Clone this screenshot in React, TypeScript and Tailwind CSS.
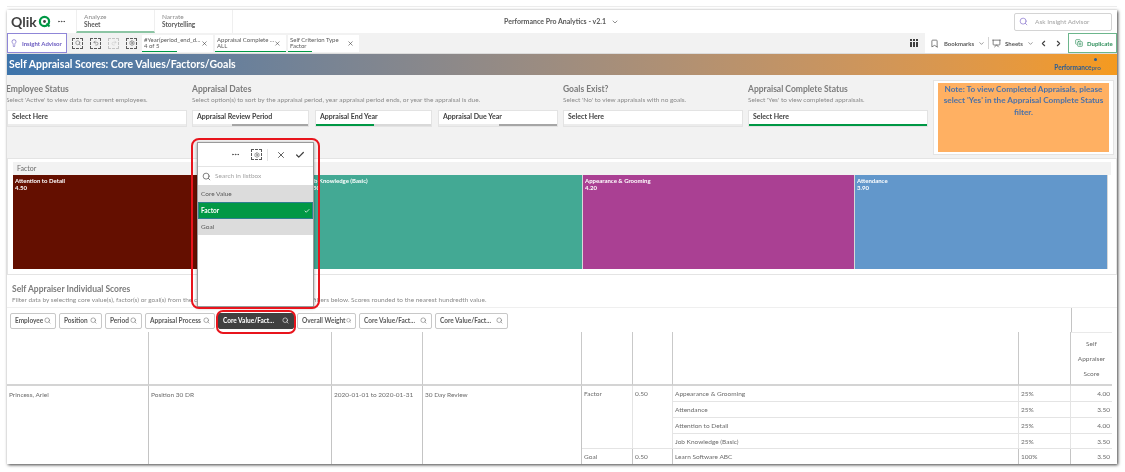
import { Bookmark, Check, ChevronDown, ChevronLeft, ChevronRight, CopyPlus, Ellipsis, Lightbulb, Presentation, Search, Settings, Undo2, Redo2, X } from "lucide-react";

const FONT = "font-['Lato',sans-serif]";

function DashedBox({ children }: { children?: React.ReactNode }) {
  return (
    <span className="flex h-[11px] w-[11px] items-center justify-center border border-dashed border-[#595959] text-[#595959]">
      {children}
    </span>
  );
}

function Chip({ title, value, bar, w }: { title: string; value: string; bar: string; w: string }) {
  return (
    <div className={`relative flex h-[17px] items-center justify-between bg-white pl-[2px] pr-[5px] ${w}`}>
      <div className="whitespace-nowrap text-[6px] leading-[6.5px] text-[#595959]">
        <div>{title}</div>
        <div>{value}</div>
      </div>
      <X size={7} className="text-[#404040]" />
      <div className={`absolute bottom-0 left-0 h-[1px] bg-[#009845] ${bar}`} />
    </div>
  );
}

function FilterBox({ label, w, left, right }: { label: string; w: string; left?: string; right?: string }) {
  return (
    <div className={`flex h-[17px] flex-col border border-[#e3e3e3] bg-white ${w}`}>
      <div className="flex-1 pl-[4px] text-[7px] font-bold leading-[11px] text-[#404040]">{label}</div>
      <div className="flex h-[2px]">
        <div className={`h-full ${left ?? "flex-1 bg-[#ececec]"}`} />
        <div className={`h-full ${right ?? "flex-1 bg-[#ececec]"}`} />
      </div>
    </div>
  );
}

function FilterHead({ title, sub }: { title: string; sub: string }) {
  return (
    <div className="h-[27px] whitespace-nowrap">
      <div className="text-[8.5px] font-bold leading-[12px] text-[#7b7b7b]">{title}</div>
      <div className="text-[6.5px] leading-[9px] text-[#8a8a8a]">{sub}</div>
    </div>
  );
}

function Block({ name, value, w, bg }: { name: string; value: string; w: string; bg: string }) {
  return (
    <div className={`h-full border-r border-[#d8d8d8] pl-[2px] pt-[2px] text-[6px] font-bold leading-[7px] text-white ${w} ${bg}`}>
      <div>{name}</div>
      <div>{value}</div>
    </div>
  );
}

function ColSearch({ label, w, active }: { label: string; w: string; active?: boolean }) {
  return (
    <div
      className={`flex h-[16px] items-center justify-between rounded-[2px] border px-[4px] text-[6.5px] font-bold ${w} ${
        active ? "border-[#404040] bg-[#404040] text-white" : "border-[#c8c8c8] bg-white text-[#595959]"
      }`}
    >
      <span className="whitespace-nowrap">{label}</span>
      <Search size={7} className={active ? "text-white" : "text-[#737373]"} />
    </div>
  );
}

const CELL = "border-r border-[#c4c4c4] text-[6.5px] leading-[15px] text-[#6b6b6b] pl-[2px] whitespace-nowrap";
const ROW = "border-b border-[#e4e4e4]";

const scores = [
  ["Appearance & Grooming", "25%", "4.00"],
  ["Attendance", "25%", "3.50"],
  ["Attention to Detail", "25%", "4.00"],
  ["Job Knowledge (Basic)", "25%", "3.50"],
];

export default function App() {
  return (
    <div className={`relative h-[472px] w-[1125px] overflow-hidden bg-white blur-[0.35px] ${FONT}`}>
      <div className="h-[6px]" />
      <div className="ml-[7px] h-px w-[1110px] bg-[#ececec]" />
      <div className="h-[3px]" />
      <div className="ml-[7px] flex h-[454px] w-[1110px] flex-col overflow-hidden bg-[#f2f2f2] shadow-[1px_1px_3px_rgba(0,0,0,0.75)]">
        {/* top bar */}
        <div className="flex h-[23px] shrink-0 items-center bg-white">
          <div className="flex w-[69px] items-center pl-[4px]">
            <span className="text-[14px] font-bold leading-none text-[#404040]">Qlik</span>
            <svg width="13" height="13" viewBox="0 0 13 13" className="ml-[1px]">
              <circle cx="6.5" cy="6.5" r="4.6" fill="none" stroke="#009845" strokeWidth="2.2" />
              <circle cx="6.5" cy="6.5" r="1.4" fill="#404040" />
              <path d="M8.5 8.5l3 3" stroke="#009845" strokeWidth="2" />
            </svg>
            <Ellipsis size={9} className="ml-[6px] text-[#404040]" />
          </div>
          <div className="h-full w-[79px] border-x border-b-2 border-[#efefef] border-b-[#8cc5a4] pl-[7px] pt-[3px] text-[6.5px] leading-[8px] text-[#8a8a8a]">
            Analyze
            <div className="font-bold text-[#595959]">Sheet</div>
          </div>
          <div className="h-full w-[78px] border-r border-[#efefef] pl-[7px] pt-[3px] text-[6.5px] leading-[8px] text-[#8a8a8a]">
            Narrate
            <div className="font-bold text-[#595959]">Storytelling</div>
          </div>
          <div className="flex flex-1 items-center justify-center gap-[5px] pr-[124px] text-[7px] font-bold text-[#595959]">
            Performance Pro Analytics - v2.1
            <ChevronDown size={8} />
          </div>
          <div className="mr-[5px] flex h-[18px] w-[98px] items-center gap-[7px] rounded-[2px] border border-[#d4d4d4] pl-[4px] text-[6.5px] text-[#a3a3a3]">
            <Search size={9} className="text-[#8f7bd0]" />
            Ask Insight Advisor
          </div>
        </div>

        {/* toolbar */}
        <div className="flex h-[21px] shrink-0 items-center border-b border-[#dcdcdc] bg-[#f2f2f2]">
          <div className="flex h-full w-[60px] items-center gap-[4px] whitespace-nowrap border border-[#8f86d8] bg-white pl-[2px] text-[6px] font-bold text-[#6a5bc0]">
            <Lightbulb size={8} />
            Insight Advisor
          </div>
          <div className="ml-[5px] flex w-[70px] items-center gap-[7px]">
            <DashedBox><Search size={6} /></DashedBox>
            <DashedBox><Undo2 size={6} /></DashedBox>
            <span className="opacity-30"><DashedBox><Redo2 size={6} /></DashedBox></span>
            <DashedBox><Settings size={6} /></DashedBox>
          </div>
          <div className="flex items-center gap-[2px]">
            <Chip title="#Year(period_end_d..." value="4 of 5" bar="w-[35px]" w="w-[71px]" />
            <Chip title="Appraisal Complete ..." value="ALL" bar="w-full" w="w-[71px]" />
            <Chip title="Self Criterion Type" value="Factor" bar="w-[24px]" w="w-[71px]" />
          </div>
          <div className="ml-auto flex h-full items-center">
            <svg width="9" height="9" viewBox="0 0 9 9" className="mr-[6px]" fill="#404040">
              <rect x="0" y="0" width="2" height="2" /><rect x="3" y="0" width="2" height="2" /><rect x="6" y="0" width="2" height="2" />
              <rect x="0" y="3" width="2" height="5" /><rect x="3" y="3" width="2" height="5" /><rect x="6" y="3" width="2" height="5" />
            </svg>
            <div className="flex h-full items-center bg-white pl-[5px] text-[6px] font-bold text-[#595959]">
              <Bookmark size={9} />
              <span className="ml-[5px]">Bookmarks</span>
              <ChevronDown size={7} className="ml-[4px]" />
              <div className="mx-[3px] h-[12px] w-px bg-[#d4d4d4]" />
              <Presentation size={9} />
              <span className="ml-[4px]">Sheets</span>
              <ChevronDown size={7} className="ml-[4px]" />
              <ChevronLeft size={9} className="ml-[5px] text-[#404040]" strokeWidth={3} />
              <ChevronRight size={9} className="ml-[6px] mr-[5px] text-[#404040]" strokeWidth={3} />
              <div className="flex h-full w-[49px] items-center gap-[4px] border border-[#6cb68c] pl-[6px] text-[#2f8f5b]">
                <CopyPlus size={8} />
                Duplicate
              </div>
            </div>
          </div>
        </div>

        {/* banner */}
        <div className="flex h-[21px] shrink-0 items-center justify-between bg-gradient-to-r from-[#3d74ab] to-[#f59a1d] pl-[2px] pr-[16px]">
          <span className="text-[10.5px] font-bold text-white">Self Appraisal Scores: Core Values/Factors/Goals</span>
          <div className="relative pt-[7px] text-[6.5px] font-bold leading-none text-[#2a5c94]">
            Performance<span className="font-normal">pro</span>
            <span className="absolute right-[4px] top-0 h-[3px] w-[3px] rounded-full bg-[#2a5c94]" />
          </div>
        </div>

        {/* filters */}
        <div className="flex h-[83px] shrink-0">
          <div className="flex">
            <div className="w-[185px] pt-[8px]">
              <div className="-ml-px">
                <FilterHead title="Employee Status" sub="Select 'Active' to view data for current employees." />
              </div>
              <FilterBox label="Select Here" w="w-[180px]" />
            </div>
            <div className="w-[371px] pt-[8px]">
              <FilterHead title="Appraisal Dates" sub="Select option(s) to sort by the appraisal period, year appraisal period ends, or year the appraisal is due." />
              <div className="flex gap-[6px]">
                <FilterBox label="Appraisal Review Period" w="w-[117px]" left="w-[39px] bg-[#ececec]" right="flex-1 bg-[#a6a6a6]" />
                <FilterBox label="Appraisal End Year" w="w-[117px]" left="w-[58px] bg-[#009845]" right="flex-1 bg-[#d9d9d9]" />
                <FilterBox label="Appraisal Due Year" w="w-[120px]" left="w-[60px] bg-[#ececec]" right="flex-1 bg-[#a6a6a6]" />
              </div>
            </div>
            <div className="w-[185px] pt-[8px]">
              <FilterHead title="Goals Exist?" sub="Select 'No' to view appraisals with no goals." />
              <FilterBox label="Select Here" w="w-[180px]" />
            </div>
            <div className="w-[185px] pt-[8px]">
              <FilterHead title="Appraisal Complete Status" sub="Select 'Yes' to view completed appraisals." />
              <FilterBox label="Select Here" w="w-[180px]" left="w-full bg-[#009845]" right="w-0" />
            </div>
          </div>
          <div className="mt-[5px] h-[75px] w-[181px] border border-[#e4e4e4] bg-white px-[4px] py-[2px]">
            <div className="h-full bg-[#ffb062] px-[2px] pt-[1px] text-center text-[8.2px] font-bold leading-[11.3px] text-[#4d72a8]">
              Note: To view Completed Appraisals, please select 'Yes' in the Appraisal Complete Status filter.
            </div>
          </div>
        </div>

        {/* treemap */}
        <div className="h-[117px] shrink-0 border border-[#e4e4e4] bg-white px-[5px] pt-[3px]">
          <div className="h-[13px] bg-[#f2f2f2] pl-[4px] text-[7px] leading-[13px] text-[#6b6b6b]">Factor</div>
          <div className="flex h-[94px] w-[1095px]">
            <Block name="Attention to Detail" value="4.50" w="w-[293px]" bg="bg-[#640f00]" />
            <Block name="Job Knowledge (Basic)" value="4.50" w="w-[277px]" bg="bg-[#43a994]" />
            <Block name="Appearance & Grooming" value="4.20" w="w-[272px]" bg="bg-[#aa4093]" />
            <Block name="Attendance" value="3.90" w="w-[253px]" bg="bg-[#6297cb]" />
          </div>
        </div>

        {/* scores */}
        <div className="flex min-h-0 flex-1 flex-col bg-white">
          <div className="h-[33px] shrink-0 border-b border-[#efefef] pl-[5px] pt-[8px]">
            <div className="text-[8.5px] font-bold leading-[12px] text-[#7b7b7b]">Self Appraiser Individual Scores</div>
            <div className="whitespace-nowrap text-[6.5px] leading-[9px] text-[#8a8a8a]">
              Filter data by selecting core value(s), factor(s) or goal(s) from the chart above, or search for items using the filters below. Scores rounded to the nearest hundredth value.
            </div>
          </div>
          <div className="flex h-[24px] shrink-0">
            <div className="flex flex-1 items-center gap-[3px] pl-[3px] pt-[1px]">
              <ColSearch label="Employee" w="w-[46px]" />
              <ColSearch label="Position" w="w-[43px]" />
              <ColSearch label="Period" w="w-[37px]" />
              <ColSearch label="Appraisal Process" w="w-[70px]" />
              <ColSearch label="Core Value/Fact..." w="w-[76px]" active />
              <ColSearch label="Overall Weight" w="w-[59px]" />
              <ColSearch label="Core Value/Fact..." w="w-[73px]" />
              <ColSearch label="Core Value/Fact..." w="w-[73px]" />
            </div>
            <div className="mr-[5px] w-[41px] border-l border-[#c4c4c4]" />
          </div>
          <div className="grid min-h-0 flex-1 grid-cols-[142px_183px_91px_159px_51px_40px_346px_52px_41px_5px] grid-rows-[54px_16px_16px_16px_15px_15px]">
            {/* header row */}
            {Array.from({ length: 8 }).map((_, i) => (
              <div key={i} className="border-b-2 border-r border-[#c9c9c9] border-b-[#d4d4d4]" />
            ))}
            <div className="flex flex-col items-center justify-center gap-[5px] border-b-2 border-t border-[#d4d4d4] border-t-[#e9e9e9] text-[6.5px] leading-[10px] text-[#6b6b6b]">
              <span>Self</span>
              <span>Appraiser</span>
              <span>Score</span>
            </div>
            <div className="row-span-6" />

            <div className={`${CELL} row-span-5 pt-[1px]`}>Princess, Ariel</div>
            <div className={`${CELL} row-span-5 pt-[1px]`}>Position 30 DR</div>
            <div className={`${CELL} row-span-5 pt-[1px]`}>2020-01-01 to 2020-01-31</div>
            <div className={`${CELL} row-span-5 pt-[1px]`}>30 Day Review</div>
            <div className={`${CELL} row-span-4 ${ROW}`}>Factor</div>
            <div className={`${CELL} row-span-4 ${ROW}`}>0.50</div>
            {scores.map(([name, pct, score]) => (
              <div key={name} className="contents">
                <div className={`${CELL} ${ROW}`}>{name}</div>
                <div className={`${CELL} ${ROW}`}>{pct}</div>
                <div className={`${ROW} pr-[2px] text-right text-[6.5px] leading-[15px] text-[#6b6b6b]`}>{score}</div>
              </div>
            ))}
            <div className={CELL}>Goal</div>
            <div className={CELL}>0.50</div>
            <div className={CELL}>Learn Software ABC</div>
            <div className={CELL}>100%</div>
            <div className="pr-[2px] text-right text-[6.5px] leading-[15px] text-[#6b6b6b]">3.50</div>
          </div>
        </div>
      </div>

      {/* listbox popup */}
      <div className="absolute left-[197px] top-[142px] flex h-[165px] w-[117px] flex-col border border-[#9a9a9a] bg-white shadow-[0_1px_3px_rgba(0,0,0,0.4)]">
        <div className="flex h-[24px] items-center justify-end border-b border-[#e4e4e4] pr-[8px] text-[#404040]">
          <Ellipsis size={9} />
          <span className="ml-[11px]"><DashedBox><Settings size={6} /></DashedBox></span>
          <div className="ml-[5px] h-[12px] w-px bg-[#e4e4e4]" />
          <X size={10} className="ml-[8px]" />
          <Check size={10} strokeWidth={3} className="ml-[9px]" />
        </div>
        <div className="flex h-[18px] items-center gap-[4px] pl-[4px] text-[6.5px] text-[#a3a3a3]">
          <Search size={9} className="text-[#595959]" />
          Search in listbox
        </div>
        <div className="h-[17px] bg-[#dcdcdc] pl-[3px] text-[6.5px] leading-[17px] text-[#595959]">Core Value</div>
        <div className="flex h-[17px] items-center justify-between border border-[#2d7f8f] bg-[#009845] px-[2px] text-[6.5px] font-bold text-white">
          Factor
          <Check size={6} strokeWidth={3} />
        </div>
        <div className="h-[16px] bg-[#dcdcdc] pl-[3px] text-[6.5px] leading-[16px] text-[#595959]">Goal</div>
      </div>

      {/* callout outlines */}
      <div className="absolute left-[191px] top-[138px] h-[171px] w-[129px] rounded-[8px] border-2 border-[#e8141c]" />
      <div className="absolute left-[216px] top-[310px] h-[24px] w-[80px] rounded-[7px] border-2 border-[#e8141c]" />
    </div>
  );
}
